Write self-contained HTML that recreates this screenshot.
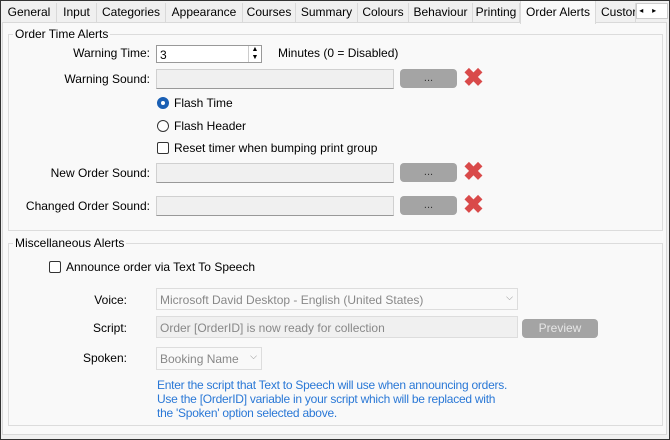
<!DOCTYPE html>
<html><head><style>
*{box-sizing:border-box;margin:0;padding:0}
body{width:670px;height:440px;background:#f0f0f0;font-family:"Liberation Sans",sans-serif;font-size:12px;color:#000;position:relative;overflow:hidden}
.a{position:absolute;white-space:nowrap}
.frame{position:absolute;left:0;top:0;width:670px;height:440px;border:1px solid #333}
.panel{position:absolute;left:2px;top:22px;width:665px;height:413px;background:#f9f9f9;border:1px solid #d9d9d9}
.tab{position:absolute;top:3px;height:19px;line-height:18px;border-right:1px solid #d9d9d9;text-align:center}
.act{top:0;height:24px;background:#f9f9f9;border:1px solid #d9d9d9;border-bottom:none;line-height:22px}
.grp{position:absolute;border:1px solid #dcdcdc}
.lbl{position:absolute;background:#f9f9f9;padding:0 2px}
.r{position:absolute;text-align:right;white-space:nowrap}
.in{position:absolute;background:#f0f0f0;border:1px solid #d0d0d0;border-bottom-color:#999}
.btn{position:absolute;background:#a4a4a4;border-radius:4px;color:#333;text-align:center;font-size:11px}
.x{position:absolute;color:#d94a4a;font-size:25px;font-weight:bold;line-height:18px}
.rad{position:absolute;width:12px;height:12px;border-radius:50%;border:1px solid #333;background:#fff}
.chk{position:absolute;width:12px;height:12px;border:1px solid #333;border-radius:2px;background:#fff}
.dis{color:#888}
</style></head><body>
<div class="panel"></div>
<div class="tab" style="left:2px;width:55px">General</div>
<div class="tab" style="left:57px;width:40px">Input</div>
<div class="tab" style="left:97px;width:69px">Categories</div>
<div class="tab" style="left:166px;width:77px">Appearance</div>
<div class="tab" style="left:243px;width:53px">Courses</div>
<div class="tab" style="left:296px;width:62px">Summary</div>
<div class="tab" style="left:358px;width:51px">Colours</div>
<div class="tab" style="left:409px;width:64px">Behaviour</div>
<div class="tab" style="left:473px;width:47px">Printing</div>
<div class="tab act" style="left:520px;width:76px">Order Alerts</div>
<div class="tab" style="left:596px;width:40px;text-align:left;padding-left:5px;overflow:hidden">Custor</div>
<div class="a" style="left:636px;top:3px;width:32px;height:16px;background:#fff;border:1px solid #ccc;font-size:8px;line-height:14px">&nbsp;◂&nbsp;&nbsp;&nbsp;&nbsp;▸</div>

<div class="grp" style="left:8px;top:34px;width:655px;height:197px"></div>
<div class="lbl a" style="left:13px;top:27px">Order Time Alerts</div>
<div class="r" style="right:520px;top:46px">Warning Time:</div>
<div class="a" style="left:156px;top:45px;width:106px;height:18px;background:#fff;border:1px solid #999;padding:2px 3px">3</div>
<div class="a" style="left:248px;top:46px;width:13px;height:16px;font-size:7px;line-height:8px;text-align:center;border-left:1px solid #ccc">▲<br>▼</div>
<div class="a" style="left:278px;top:46px">Minutes (0 = Disabled)</div>

<div class="r" style="right:520px;top:72px">Warning Sound:</div>
<div class="in" style="left:156px;top:69px;width:238px;height:20px"></div>
<div class="btn" style="left:400px;top:69px;width:57px;height:19px;line-height:19px">...</div>
<div class="x" style="left:463px;top:69px">✖</div>

<div class="rad" style="left:157px;top:97px;border:4px solid #1a5fb4"></div>
<div class="a" style="left:174px;top:96px">Flash Time</div>
<div class="rad" style="left:157px;top:120px"></div>
<div class="a" style="left:174px;top:119px">Flash Header</div>
<div class="chk" style="left:157px;top:142px"></div>
<div class="a" style="left:174px;top:141px">Reset timer when bumping print group</div>

<div class="r" style="right:520px;top:166px">New Order Sound:</div>
<div class="in" style="left:156px;top:163px;width:238px;height:20px"></div>
<div class="btn" style="left:400px;top:163px;width:57px;height:19px;line-height:19px">...</div>
<div class="x" style="left:463px;top:163px">✖</div>

<div class="r" style="right:520px;top:199px">Changed Order Sound:</div>
<div class="in" style="left:156px;top:196px;width:238px;height:20px"></div>
<div class="btn" style="left:400px;top:196px;width:57px;height:19px;line-height:19px">...</div>
<div class="x" style="left:463px;top:196px">✖</div>

<div class="grp" style="left:8px;top:243px;width:655px;height:183px"></div>
<div class="lbl a" style="left:13px;top:236px">Miscellaneous Alerts</div>
<div class="chk" style="left:49px;top:261px"></div>
<div class="a" style="left:66px;top:260px">Announce order via Text To Speech</div>

<div class="r" style="right:543px;top:293px">Voice:</div>
<div class="a dis" style="left:156px;top:288px;width:362px;height:22px;border:1px solid #ddd;background:#f9f9f9;padding:4px 3px">Microsoft David Desktop - English (United States)<span style="position:absolute;right:4px;top:3px;font-size:9px">⌵</span></div>
<div class="r" style="right:543px;top:321px">Script:</div>
<div class="a dis" style="left:156px;top:316px;width:362px;height:22px;border:1px solid #ddd;background:#f0f0f0;padding:4px 3px">Order [OrderID] is now ready for collection</div>
<div class="btn" style="left:522px;top:319px;width:76px;height:19px;line-height:19px;font-size:12px;color:#e6e6e6">Preview</div>
<div class="r" style="right:543px;top:351px">Spoken:</div>
<div class="a dis" style="left:156px;top:347px;width:106px;height:23px;border:1px solid #ddd;background:#f9f9f9;padding:4px 3px">Booking Name<span style="position:absolute;right:4px;top:3px;font-size:9px">⌵</span></div>
<div class="a" style="left:157px;top:378px;color:#2a78d6;line-height:14px;letter-spacing:-0.25px">Enter the script that Text to Speech will use when announcing orders.<br>Use the [OrderID] variable in your script which will be replaced with<br>the 'Spoken' option selected above.</div>
<div class="frame"></div>
</body></html>
